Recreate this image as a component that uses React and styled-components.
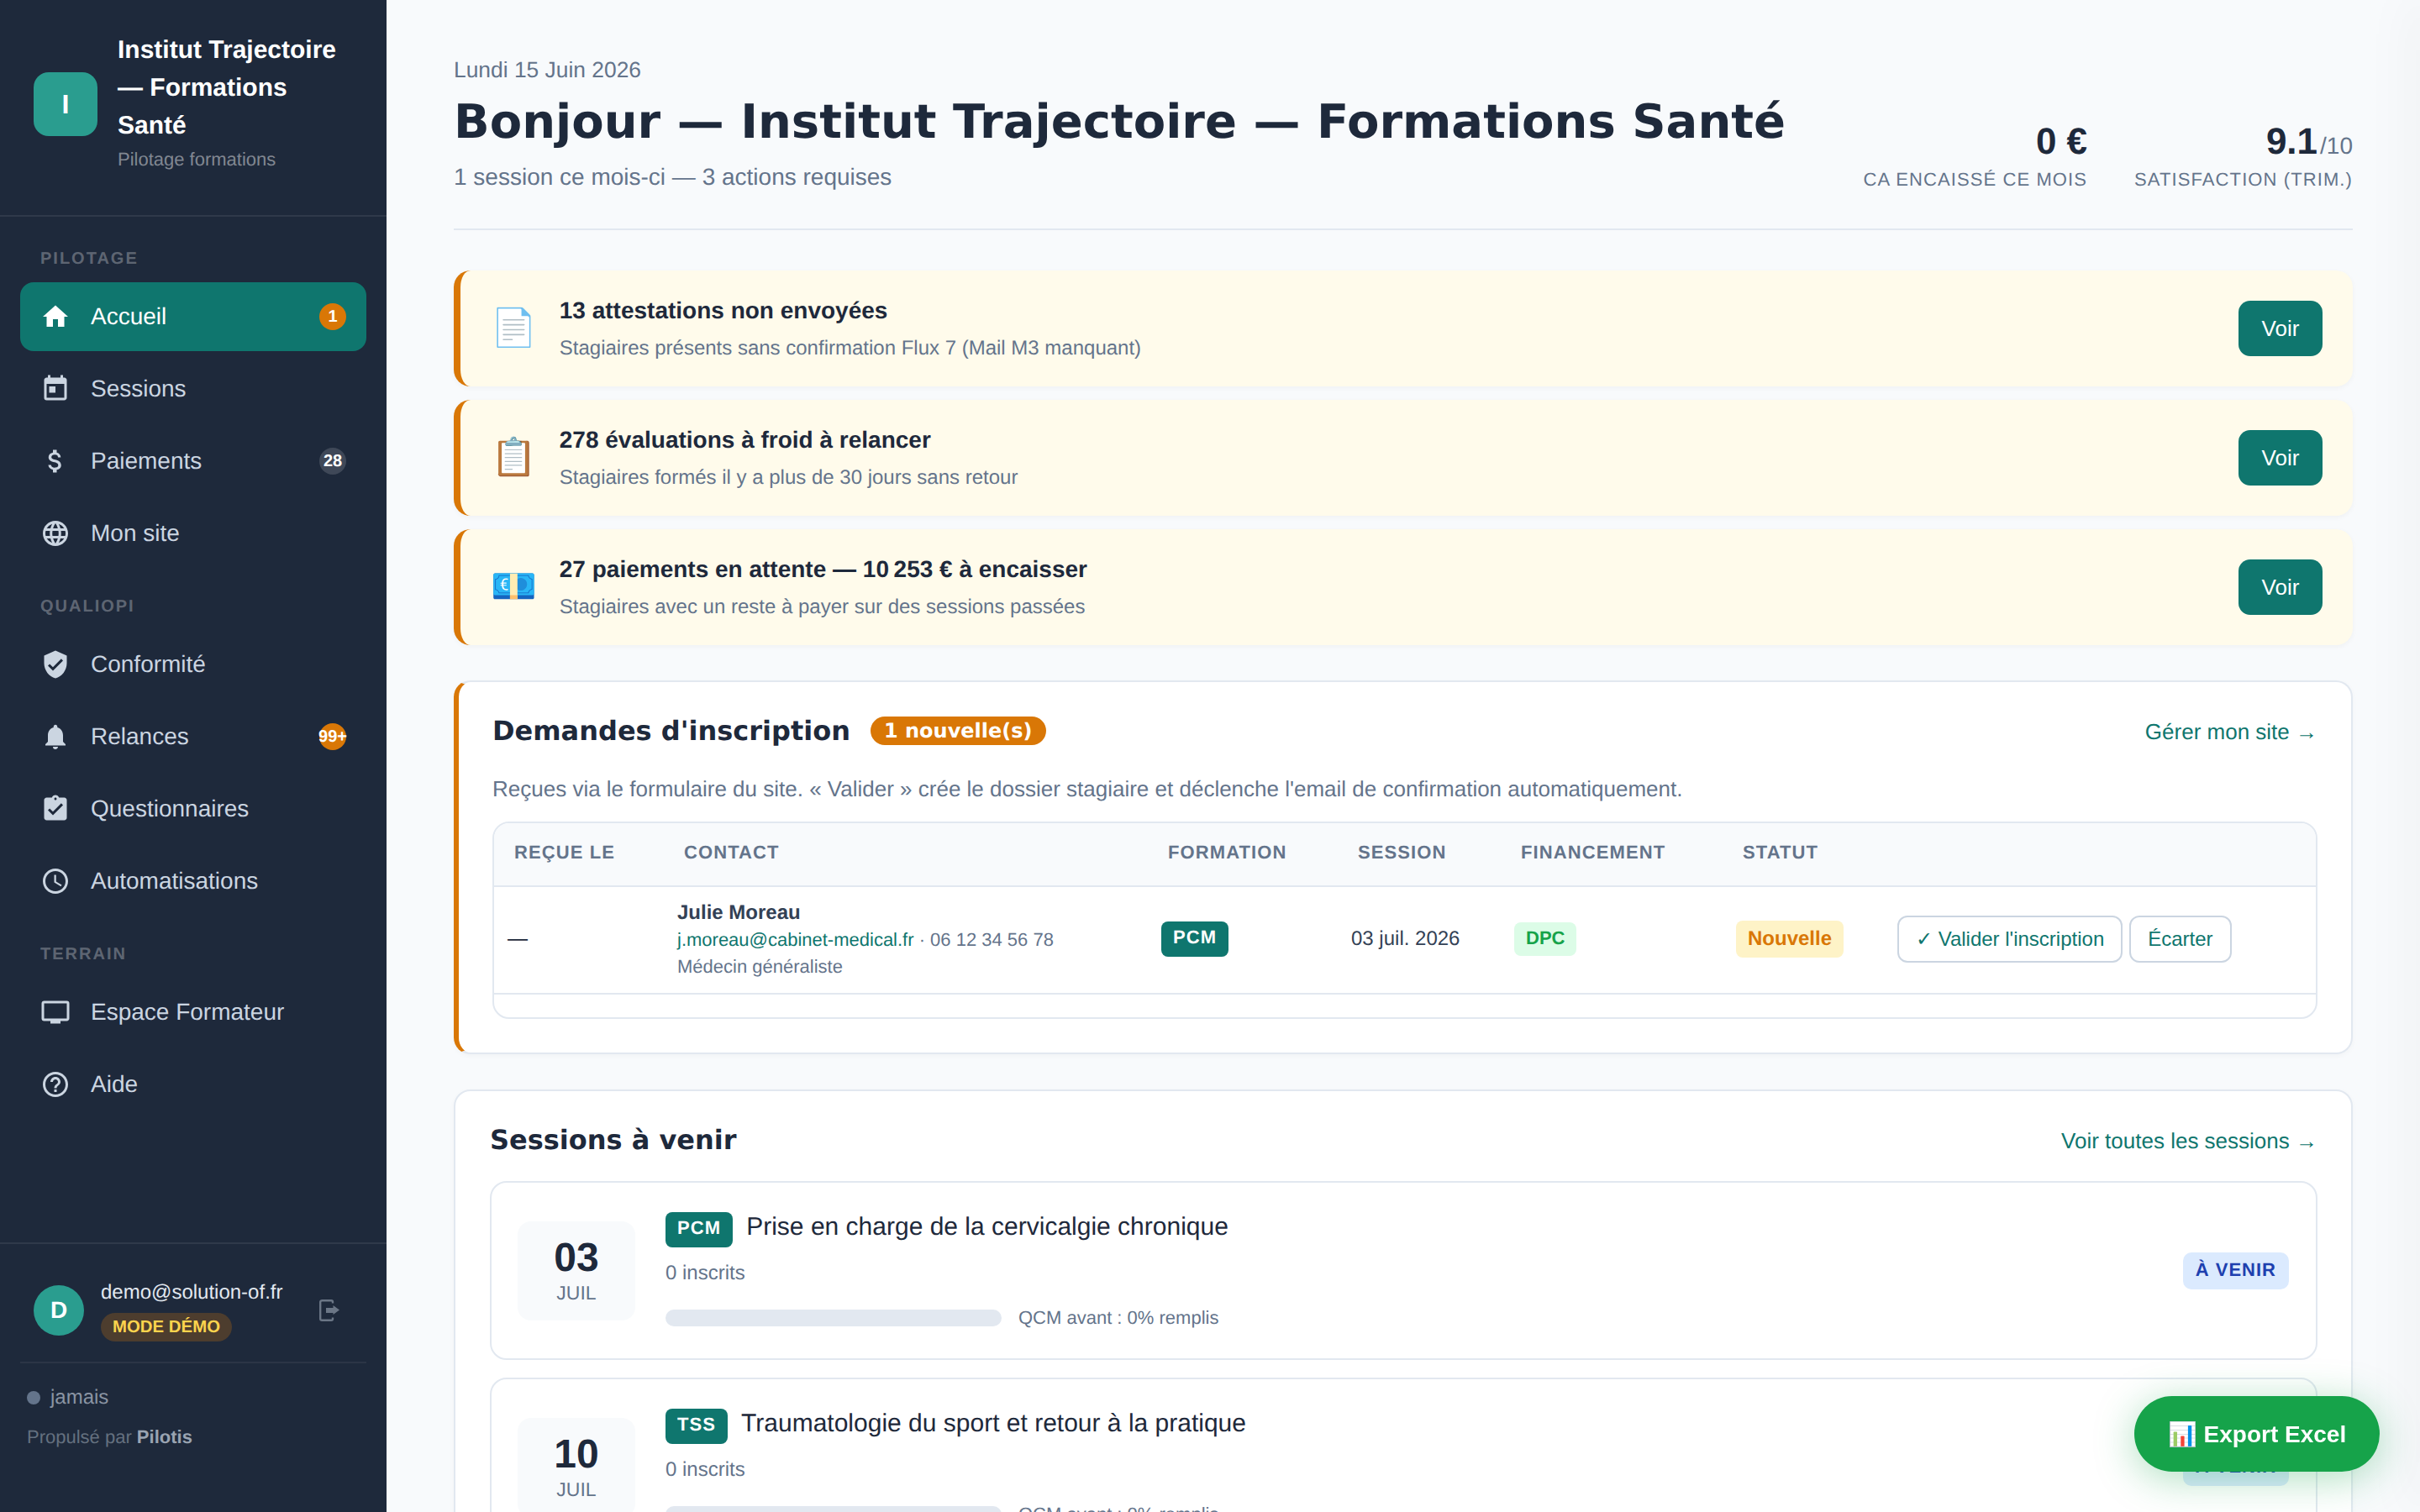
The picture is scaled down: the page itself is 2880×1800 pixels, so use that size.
import React from "react";
import styled, { createGlobalStyle } from "styled-components";
import {
  MdHome,
  MdToday,
  MdAttachMoney,
  MdLanguage,
  MdVerifiedUser,
  MdNotifications,
  MdAssignmentTurnedIn,
  MdAccessTime,
  MdPersonalVideo,
  MdHelpOutline,
} from "react-icons/md";

const navGroups = [
  {
    label: "Pilotage",
    items: [
      { name: "Accueil", Icon: MdHome, active: true, badge: "1", tone: "orange" },
      { name: "Sessions", Icon: MdToday },
      { name: "Paiements", Icon: MdAttachMoney, badge: "28", tone: "grey" },
      { name: "Mon site", Icon: MdLanguage },
    ],
  },
  {
    label: "Qualiopi",
    items: [
      { name: "Conformité", Icon: MdVerifiedUser },
      { name: "Relances", Icon: MdNotifications, badge: "99+", tone: "orange" },
      { name: "Questionnaires", Icon: MdAssignmentTurnedIn },
      { name: "Automatisations", Icon: MdAccessTime },
    ],
  },
  {
    label: "Terrain",
    items: [
      { name: "Espace Formateur", Icon: MdPersonalVideo },
      { name: "Aide", Icon: MdHelpOutline },
    ],
  },
];

const alerts = [
  {
    emoji: "📄",
    title: "13 attestations non envoyées",
    text: "Stagiaires présents sans confirmation Flux 7 (Mail M3 manquant)",
  },
  {
    emoji: "📋",
    title: "278 évaluations à froid à relancer",
    text: "Stagiaires formés il y a plus de 30 jours sans retour",
  },
  {
    emoji: "💶",
    title: "27 paiements en attente — 10\u202f253 € à encaisser",
    text: "Stagiaires avec un reste à payer sur des sessions passées",
  },
];

const sessions = [
  { day: "03", month: "Juil", code: "PCM", title: "Prise en charge de la cervicalgie chronique" },
  { day: "10", month: "Juil", code: "TSS", title: "Traumatologie du sport et retour à la pratique" },
];

const tableColumns = "202px 576px 226px 194px 264px 192px 1fr";

const LogoutIcon = () => (
  <svg width="24" height="26" viewBox="0 0 24 26" fill="none">
    <path d="M16 4.5V3c0-1-.8-1.8-1.8-1.8h-11c-1 0-2 .8-2 1.8v20c0 1 1 1.8 2 1.8h11c1 0 1.8-.8 1.8-1.8v-1.5" stroke="currentColor" strokeWidth="2.4" />
    <path d="M8 10h8.5V7L24 12.5 16.5 18v-2H8z" fill="currentColor" />
  </svg>
);

export default function App() {
  return (
    <>
      <GlobalStyle />
      <Layout>
        <Sidebar>
          <Brand>
            <BrandMark>I</BrandMark>
            <div>
              <BrandName>Institut Trajectoire — Formations Santé</BrandName>
              <BrandSub>Pilotage formations</BrandSub>
            </div>
          </Brand>

          <Nav>
            {navGroups.map((group) => (
              <NavGroup key={group.label}>
                <NavLabel>{group.label}</NavLabel>
                {group.items.map(({ name, Icon, active, badge, tone }) => (
                  <NavItem key={name} $active={active}>
                    <Icon size={36} />
                    <span>{name}</span>
                    {badge && <NavBadge $tone={tone}>{badge}</NavBadge>}
                  </NavItem>
                ))}
              </NavGroup>
            ))}
          </Nav>

          <SideFooter>
            <UserRow>
              <Avatar>D</Avatar>
              <UserInfo>
                <UserMail>demo@solution-of.fr</UserMail>
                <DemoPill>MODE DÉMO</DemoPill>
              </UserInfo>
              <LogoutButton>
                <LogoutIcon />
              </LogoutButton>
            </UserRow>
            <SyncBlock>
              <SyncRow>
                <SyncDot />
                jamais
              </SyncRow>
              <Powered>
                Propulsé par <b>Pilotis</b>
              </Powered>
            </SyncBlock>
          </SideFooter>
        </Sidebar>

        <Main>
          <PageHeader>
            <HeaderText>
              <DateLine>Lundi 15 Juin 2026</DateLine>
              <PageTitle>Bonjour — Institut Trajectoire — Formations Santé</PageTitle>
              <PageSub>1 session ce mois-ci — 3 actions requises</PageSub>
            </HeaderText>
            <Stats>
              <Stat>
                <StatValue>0 €</StatValue>
                <StatLabel>CA encaissé ce mois</StatLabel>
              </Stat>
              <Stat>
                <StatValue>
                  9.1<small>/10</small>
                </StatValue>
                <StatLabel>Satisfaction (trim.)</StatLabel>
              </Stat>
            </Stats>
          </PageHeader>

          <AlertList>
            {alerts.map((alert) => (
              <Alert key={alert.title}>
                <AlertEmoji>{alert.emoji}</AlertEmoji>
                <AlertBody>
                  <AlertTitle>{alert.title}</AlertTitle>
                  <AlertText>{alert.text}</AlertText>
                </AlertBody>
                <VoirButton>Voir</VoirButton>
              </Alert>
            ))}
          </AlertList>

          <RequestsCard>
            <CardHead>
              <CardTitleRow>
                <CardTitle>Demandes d'inscription</CardTitle>
                <NewPill>1 nouvelle(s)</NewPill>
              </CardTitleRow>
              <CardLink>Gérer mon site →</CardLink>
            </CardHead>
            <CardDesc>
              Reçues via le formulaire du site. « Valider » crée le dossier stagiaire et déclenche l'email de
              confirmation automatiquement.
            </CardDesc>
            <TableWrap>
              <TableHead>
                <span>Reçue le</span>
                <span>Contact</span>
                <span>Formation</span>
                <span>Session</span>
                <span>Financement</span>
                <span>Statut</span>
              </TableHead>
              <TableRow>
                <span>—</span>
                <Contact>
                  <strong>Julie Moreau</strong>
                  <div>
                    <a>j.moreau@cabinet-medical.fr</a> · 06 12 34 56 78
                  </div>
                  <div>Médecin généraliste</div>
                </Contact>
                <div>
                  <CodeTag>PCM</CodeTag>
                </div>
                <SessionDate>03 juil. 2026</SessionDate>
                <div>
                  <FundingTag>DPC</FundingTag>
                </div>
                <div>
                  <StatusTag>Nouvelle</StatusTag>
                </div>
                <RowActions>
                  <GhostButton>✓ Valider l'inscription</GhostButton>
                  <GhostButton>Écarter</GhostButton>
                </RowActions>
              </TableRow>
              <TableEnd />
            </TableWrap>
          </RequestsCard>

          <SessionsCard>
            <SessionsHead>
              <CardTitle>Sessions à venir</CardTitle>
              <CardLink>Voir toutes les sessions →</CardLink>
            </SessionsHead>
            {sessions.map((session) => (
              <SessionItem key={session.code}>
                <DateBox>
                  <DateDay>{session.day}</DateDay>
                  <DateMonth>{session.month}</DateMonth>
                </DateBox>
                <SessionBody>
                  <SessionTitleRow>
                    <CodeTag>{session.code}</CodeTag>
                    <SessionTitle>{session.title}</SessionTitle>
                  </SessionTitleRow>
                  <Enrolled>0 inscrits</Enrolled>
                  <ProgressRow>
                    <ProgressTrack />
                    <ProgressLabel>QCM avant : 0% remplis</ProgressLabel>
                  </ProgressRow>
                </SessionBody>
                <UpcomingTag>À venir</UpcomingTag>
              </SessionItem>
            ))}
          </SessionsCard>
        </Main>
      </Layout>
      <ExportButton>📊 Export Excel</ExportButton>
      <ClosedDrawer />
    </>
  );
}

const GlobalStyle = createGlobalStyle`
  * {
    box-sizing: border-box;
  }

  html,
  body {
    margin: 0;
    height: 100%;
    overflow: hidden;
  }

  body {
    background: #f8fafc;
    color: #1e293b;
    font-family: "Liberation Sans", Arial, sans-serif;
    font-size: 28px;
    text-rendering: geometricPrecision;
  }
`;

const Layout = styled.div`
  display: flex;
  height: 100vh;
  overflow: hidden;
`;

const Sidebar = styled.aside`
  flex: 0 0 460px;
  display: flex;
  flex-direction: column;
  background: #1e293b;
`;

const Brand = styled.div`
  display: flex;
  align-items: center;
  gap: 24px;
  height: 258px;
  padding: 0 40px 14px;
  border-bottom: 2px solid rgba(255, 255, 255, 0.08);
`;

const BrandMark = styled.div`
  flex: 0 0 76px;
  height: 76px;
  margin-top: 6px;
  display: flex;
  align-items: center;
  justify-content: center;
  border-radius: 18px;
  background: #2a9d8f;
  color: #fff;
  font-size: 32px;
  font-weight: 700;
`;

const BrandName = styled.div`
  color: #fff;
  font-size: 30px;
  font-weight: 700;
  line-height: 45px;
`;

const BrandSub = styled.div`
  margin-top: 3px;
  color: rgba(255, 255, 255, 0.45);
  font-size: 22px;
  line-height: 30px;
`;

const Nav = styled.nav`
  flex: 1;
  padding: 37px 24px 0;
`;

const NavGroup = styled.div`
  display: flex;
  flex-direction: column;
  gap: 4px;
  margin-bottom: 33px;
`;

const NavLabel = styled.div`
  padding-left: 24px;
  margin-bottom: 11px;
  color: rgba(255, 255, 255, 0.3);
  font-size: 20px;
  font-weight: 700;
  line-height: 26px;
  letter-spacing: 2px;
  text-transform: uppercase;
`;

const NavItem = styled.div`
  display: flex;
  align-items: center;
  gap: 24px;
  height: 82px;
  padding: 0 24px;
  border-radius: 16px;
  background: ${({ $active }) => ($active ? "#0f766e" : "transparent")};
  color: ${({ $active }) => ($active ? "#fff" : "#cbd5e1")};
  font-size: 28px;
`;

const NavBadge = styled.span`
  margin-left: auto;
  width: 32px;
  height: 32px;
  display: flex;
  align-items: center;
  justify-content: center;
  border-radius: 50%;
  background: ${({ $tone }) => ($tone === "orange" ? "#d97706" : "rgba(255, 255, 255, 0.15)")};
  color: #fff;
  font-size: 20px;
  font-weight: 700;
  white-space: nowrap;
`;

const SideFooter = styled.div`
  flex: 0 0 auto;
  height: 321px;
  border-top: 2px solid rgba(255, 255, 255, 0.08);
`;

const UserRow = styled.div`
  display: flex;
  align-items: center;
  gap: 20px;
  padding: 41px 56px 0 40px;
`;

const Avatar = styled.div`
  flex: 0 0 60px;
  height: 60px;
  display: flex;
  align-items: center;
  justify-content: center;
  border-radius: 50%;
  background: #2a9d8f;
  color: #fff;
  font-size: 28px;
  font-weight: 700;
`;

const UserInfo = styled.div`
  flex: 1;
`;

const UserMail = styled.div`
  color: #e2e8f0;
  font-size: 24px;
  line-height: 34px;
`;

const DemoPill = styled.div`
  display: inline-block;
  margin-top: 7px;
  padding: 0 14px;
  height: 34px;
  border-radius: 17px;
  background: #4d3d2e;
  color: #fcd34d;
  font-size: 20.4px;
  font-weight: 700;
  line-height: 34px;
`;

const LogoutButton = styled.div`
  display: flex;
  color: #6b7686;
`;

const SyncBlock = styled.div`
  margin: 24px 24px 0;
  padding: 26px 8px 0;
  border-top: 2px solid rgba(255, 255, 255, 0.06);
`;

const SyncRow = styled.div`
  display: flex;
  align-items: center;
  gap: 12px;
  color: #8a94a3;
  font-size: 24px;
  line-height: 30px;
`;

const SyncDot = styled.span`
  width: 16px;
  height: 16px;
  border-radius: 50%;
  background: #64748b;
`;

const Powered = styled.div`
  margin-top: 17px;
  color: #64707f;
  font-size: 22px;
  line-height: 30px;

  b {
    color: #9aa4b2;
  }
`;

const Main = styled.main`
  flex: 1;
  min-width: 0;
  padding: 64px 80px 0;
`;

const PageHeader = styled.header`
  display: flex;
  justify-content: space-between;
  align-items: flex-end;
  height: 210px;
  padding-bottom: 43px;
  border-bottom: 2px solid #e2e8f0;
`;

const HeaderText = styled.div`
  align-self: flex-start;
`;

const DateLine = styled.div`
  color: #64748b;
  font-size: 26.4px;
  line-height: 38px;
`;

const PageTitle = styled.h1`
  margin: 6px 0 0;
  color: #1e293b;
  font-family: "DejaVu Sans", sans-serif;
  font-size: 56px;
  font-weight: 700;
  line-height: 76px;
  white-space: nowrap;
`;

const PageSub = styled.div`
  margin-top: 8px;
  color: #64748b;
  font-size: 28px;
  line-height: 38px;
`;

const Stats = styled.div`
  display: flex;
  gap: 56px;
`;

const Stat = styled.div`
  text-align: right;
`;

const StatValue = styled.div`
  color: #1e293b;
  font-size: 44px;
  font-weight: 700;
  line-height: 50px;

  small {
    margin-left: 3px;
    color: #64748b;
    font-size: 28px;
    font-weight: 400;
    line-height: 1;
  }
`;

const StatLabel = styled.div`
  margin-top: 5px;
  color: #64748b;
  font-size: 22px;
  line-height: 30px;
  letter-spacing: 1.1px;
  text-transform: uppercase;
`;

const AlertList = styled.div`
  display: flex;
  flex-direction: column;
  gap: 16px;
  margin: 48px 0 42px;
`;

const Alert = styled.div`
  display: flex;
  align-items: center;
  gap: 27px;
  height: 138px;
  padding: 0 36px;
  border-left: 8px solid #d97706;
  border-radius: 20px;
  background: #fffbeb;
  box-shadow: 0 2px 6px rgba(0, 0, 0, 0.04);
`;

const AlertEmoji = styled.div`
  font-size: 44px;
  line-height: 1;
`;

const AlertBody = styled.div`
  flex: 1;
`;

const AlertTitle = styled.div`
  color: #1e293b;
  font-size: 28px;
  font-weight: 700;
  line-height: 38px;
`;

const AlertText = styled.div`
  margin-top: 9px;
  color: #64748b;
  font-size: 24px;
  line-height: 34px;
`;

const VoirButton = styled.button`
  width: 100px;
  height: 66px;
  border: 0;
  border-radius: 14px;
  background: #0f766e;
  color: #fff;
  font-family: inherit;
  font-size: 26px;
`;

const RequestsCard = styled.section`
  height: 445px;
  margin-bottom: 42px;
  padding: 36px 40px 0 40px;
  border: 2px solid #e2e8f0;
  border-left: 6px solid #d97706;
  border-radius: 20px;
  background: #fff;
  box-shadow: 0 2px 6px rgba(0, 0, 0, 0.03);
`;

const CardHead = styled.div`
  display: flex;
  align-items: center;
  justify-content: space-between;
  height: 44px;
`;

const CardTitleRow = styled.div`
  display: flex;
  align-items: center;
  gap: 24px;
`;

const CardTitle = styled.h2`
  margin: 0;
  color: #1e293b;
  font-family: "DejaVu Sans", sans-serif;
  font-size: 32px;
  font-weight: 700;
`;

const NewPill = styled.span`
  height: 34px;
  padding: 0 16px;
  border-radius: 17px;
  background: #d97706;
  color: #fff;
  font-family: "DejaVu Sans", sans-serif;
  font-size: 24px;
  font-weight: 700;
  line-height: 34px;
`;

const CardLink = styled.a`
  margin-top: 2px;
  color: #0f766e;
  font-size: 26px;
`;

const CardDesc = styled.p`
  margin: 27px 0 19px;
  color: #64748b;
  font-size: 26px;
  line-height: 40px;
`;

const TableWrap = styled.div`
  overflow: hidden;
  border: 2px solid #e2e8f0;
  border-radius: 20px;
`;

const TableHead = styled.div`
  display: grid;
  grid-template-columns: ${tableColumns};
  align-items: center;
  height: 76px;
  padding-bottom: 4px;
  background: #f8fafc;
  border-bottom: 2px solid #e2e8f0;
  color: #64748b;
  font-size: 22px;
  font-weight: 700;
  letter-spacing: 1.1px;
  text-transform: uppercase;

  span {
    padding-left: 24px;
  }
`;

const TableRow = styled.div`
  display: grid;
  grid-template-columns: ${tableColumns};
  align-items: center;
  height: 128px;
  padding-bottom: 2px;
  border-bottom: 2px solid #e2e8f0;
  font-size: 24px;

  & > * {
    padding-left: 16px;
  }
`;

const TableEnd = styled.div`
  height: 27px;
`;

const Contact = styled.div`
  margin-top: 2px;
  color: #64748b;
  font-size: 22px;
  line-height: 32px;

  strong {
    display: block;
    color: #334155;
    font-size: 24px;
  }

  a {
    color: #0f766e;
  }
`;

const CodeTag = styled.span`
  display: inline-block;
  height: 42px;
  padding: 0 14px;
  border-radius: 8px;
  background: #0f766e;
  color: #fff;
  font-size: 22px;
  font-weight: 700;
  line-height: 38px;
  letter-spacing: 1.1px;
`;

const SessionDate = styled.div`
  color: #334155;
`;

const FundingTag = styled.span`
  display: inline-block;
  height: 40px;
  padding: 0 14px;
  border-radius: 8px;
  background: #dcfce7;
  color: #16a34a;
  font-size: 22px;
  font-weight: 700;
  line-height: 38px;
`;

const StatusTag = styled.span`
  display: inline-block;
  height: 44px;
  padding: 0 14px;
  border-radius: 8px;
  background: #fef3c7;
  color: #d97706;
  font-size: 24px;
  font-weight: 700;
  line-height: 44px;
`;

const RowActions = styled.div`
  display: flex;
  gap: 8px;
`;

const GhostButton = styled.button`
  height: 56px;
  padding: 0 20px;
  border: 2px solid #cbd5e1;
  border-radius: 12px;
  background: #fff;
  color: #0f766e;
  font-family: inherit;
  font-size: 24px;
`;

const SessionsCard = styled.section`
  padding: 36px 40px 0 41px;
  border: 2px solid #e2e8f0;
  border-radius: 20px;
  background: #fff;
  box-shadow: 0 2px 6px rgba(0, 0, 0, 0.03);
`;

const SessionsHead = styled.div`
  display: flex;
  align-items: center;
  justify-content: space-between;
  height: 44px;
  margin-bottom: 27px;
`;

const SessionItem = styled.div`
  display: flex;
  align-items: center;
  gap: 36px;
  height: 213px;
  margin-bottom: 21px;
  padding: 0 32px 0 31px;
  border: 2px solid #e2e8f0;
  border-radius: 20px;
`;

const DateBox = styled.div`
  flex: 0 0 140px;
  height: 118px;
  display: flex;
  flex-direction: column;
  align-items: center;
  justify-content: center;
  border-radius: 16px;
  background: #f8fafc;
`;

const DateDay = styled.div`
  color: #1e293b;
  font-size: 48px;
  font-weight: 700;
  line-height: 52px;
`;

const DateMonth = styled.div`
  color: #64748b;
  font-size: 23px;
  line-height: 30px;
  text-transform: uppercase;
`;

const SessionBody = styled.div`
  flex: 1;
`;

const SessionTitleRow = styled.div`
  display: flex;
  align-items: flex-start;
  gap: 16px;
`;

const SessionTitle = styled.div`
  color: #1e293b;
  font-size: 30px;
  line-height: 36px;
`;

const Enrolled = styled.div`
  margin-top: 16px;
  color: #64748b;
  font-size: 24px;
  line-height: 30px;
`;

const ProgressRow = styled.div`
  display: flex;
  align-items: center;
  gap: 20px;
  margin-top: 24px;
`;

const ProgressTrack = styled.div`
  width: 400px;
  height: 20px;
  border-radius: 10px;
  background: #e2e8f0;
`;

const ProgressLabel = styled.div`
  color: #64748b;
  font-size: 22px;
  line-height: 28px;
`;

const UpcomingTag = styled.span`
  height: 44px;
  padding: 0 15px;
  border-radius: 10px;
  background: #dbeafe;
  color: #1e40af;
  font-size: 22px;
  font-weight: 700;
  line-height: 42px;
  letter-spacing: 1px;
  text-transform: uppercase;
`;

const ExportButton = styled.button`
  position: fixed;
  right: 48px;
  bottom: 48px;
  width: 292px;
  height: 90px;
  border: 0;
  border-radius: 45px;
  background: #16a34a;
  color: #fff;
  font-family: inherit;
  font-size: 28px;
  font-weight: 700;
  box-shadow: 0 8px 48px rgba(22, 163, 74, 0.35);
`;

const ClosedDrawer = styled.div`
  position: fixed;
  top: 0;
  left: 100%;
  width: 10px;
  height: 100vh;
  box-shadow: 0 0 60px rgba(0, 0, 0, 0.15);
`;
